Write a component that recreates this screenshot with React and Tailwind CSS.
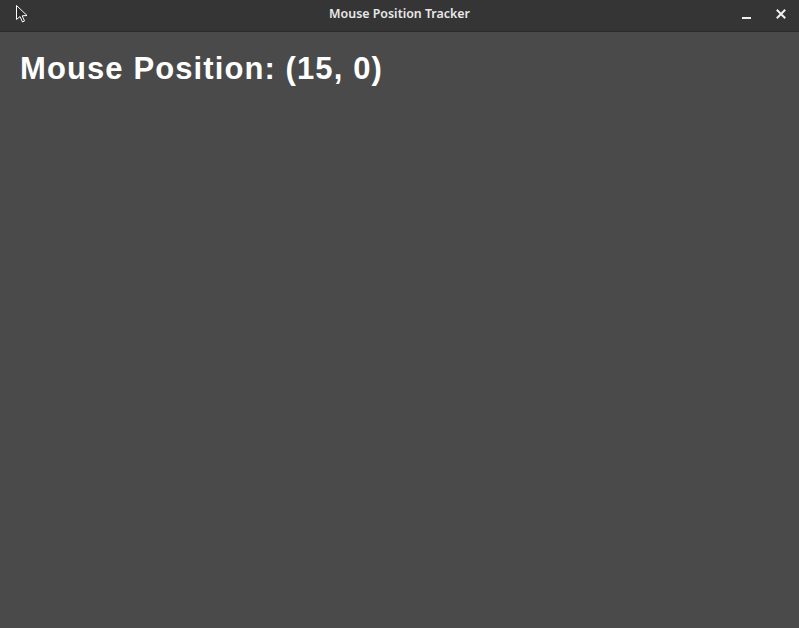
export default function App() {
  return (
    <div className="flex flex-col h-[628px] w-[799px] bg-[#4a4a4a] overflow-hidden">
      <div className="relative flex items-center justify-center h-[32px] bg-[#353535] border-b border-[#2b2b2b] shrink-0">
        <svg className="absolute left-[15px] top-[4px]" width="14" height="20" viewBox="0 0 14 20">
          <path d="M1.5 1.5 L1.5 15.5 L5 12.5 L7.5 18 L9.5 17 L7.2 11.8 L12 11.5 Z" fill="#2b2b2b" stroke="#ffffff" strokeWidth="1" strokeLinejoin="round" />
        </svg>
        <div className="text-[12.4px] font-semibold text-[#e8e8e8] -mt-[2px]" style={{ fontFamily: '"Noto Sans", sans-serif' }}>
          Mouse Position Tracker
        </div>
        <div className="absolute right-[13px] top-0 h-full flex items-center gap-[25px]">
          <div className="w-[9px] h-[2px] bg-[#f0f0f0] mt-[5px]" />
          <svg width="10" height="10" viewBox="0 0 10 10" className="-mt-[4px]">
            <path d="M1.5 1.5 L8.5 8.5 M8.5 1.5 L1.5 8.5" stroke="#f0f0f0" strokeWidth="2" strokeLinecap="square" />
          </svg>
        </div>
      </div>
      <div className="pl-[20px] pt-[20px]">
        <h1 className="text-[31px] font-bold text-white leading-[34px] tracking-[1.1px]" style={{ fontFamily: '"Liberation Sans", Arial, sans-serif' }}>
          Mouse Position: (15, 0)
        </h1>
      </div>
    </div>
  );
}
